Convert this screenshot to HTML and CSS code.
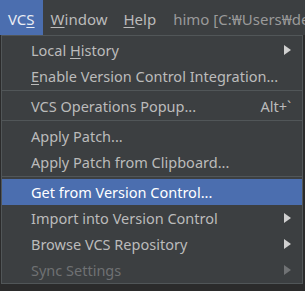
FILE: index.html
```html
<!DOCTYPE html>
<html>

<head>
    <title>VCS Menu</title>
    <link rel="stylesheet" href="styles.css">
</head>

<body>
    <div class="menubar">
        <span class="menu active">VC<u>S</u></span>
        <span class="menu"><u>W</u>indow</span>
        <span class="menu"><u>H</u>elp</span>
        <span class="title">himo [C:₩Users₩de</span>
    </div>

    <div class="popup">
        <div class="item">
            <span class="label">Local <u>H</u>istory</span>
            <span class="arrow"></span>
        </div>
        <div class="item">
            <span class="label"><u>E</u>nable Version Control Integration...</span>
        </div>
        <div class="separator"></div>
        <div class="item">
            <span class="label">VCS Operations Popup...</span>
            <span class="shortcut">Alt+`</span>
        </div>
        <div class="separator"></div>
        <div class="item">
            <span class="label">Apply Patch...</span>
        </div>
        <div class="item">
            <span class="label">Apply Patch from Clipboard...</span>
        </div>
        <div class="separator"></div>
        <div class="item selected">
            <span class="label">Get from Version Control...</span>
        </div>
        <div class="item">
            <span class="label">Import into Version Control</span>
            <span class="arrow"></span>
        </div>
        <div class="item">
            <span class="label">Browse VCS Repository</span>
            <span class="arrow"></span>
        </div>
        <div class="item disabled">
            <span class="label">Sync Settings</span>
            <span class="arrow"></span>
        </div>
    </div>
</body>

</html>
```

FILE: styles.css
```css
body {
    margin: 0;
    background: #2b2b2b;
    font-family: "Noto Sans", "Open Sans", sans-serif;
    font-size: 14.5px;
    color: #bbbbbb;
    overflow: hidden;
}

u {
    text-decoration: underline;
    text-underline-offset: 2px;
}

.menubar {
    height: 35px;
    display: flex;
    background: #3c3f41;
    font-size: 15px;
    white-space: nowrap;
    overflow: hidden;
}

.menu {
    display: flex;
    align-items: center;
    padding: 3px 8px 0 8px;
}

.menu.active {
    background: #4b6eaf;
    color: #e8ecf4;
}

.title {
    display: flex;
    align-items: center;
    padding-top: 3px;
    margin-left: 9px;
    color: #9a9a9a;
}

.popup {
    margin-left: 1px;
    width: 302px;
    box-sizing: border-box;
    background: #3c3f41;
    border: 1px solid #515658;
    padding-top: 1px;
}

.item {
    height: 26px;
    display: flex;
    align-items: center;
    padding: 0 11px 0 29px;
    white-space: nowrap;
}

.item .label {
    flex: 1;
}

.item.selected {
    background: #4b6eaf;
    color: #ffffff;
}

.item.disabled {
    color: #6f7173;
}

.arrow {
    width: 0;
    height: 0;
    border-top: 5px solid transparent;
    border-bottom: 5px solid transparent;
    border-left: 7px solid #d0d0d0;
}

.item.disabled .arrow {
    border-left-color: #707274;
}

.separator {
    height: 2px;
    margin-top: 1px;
    border-top: 1px solid #515658;
}
```
